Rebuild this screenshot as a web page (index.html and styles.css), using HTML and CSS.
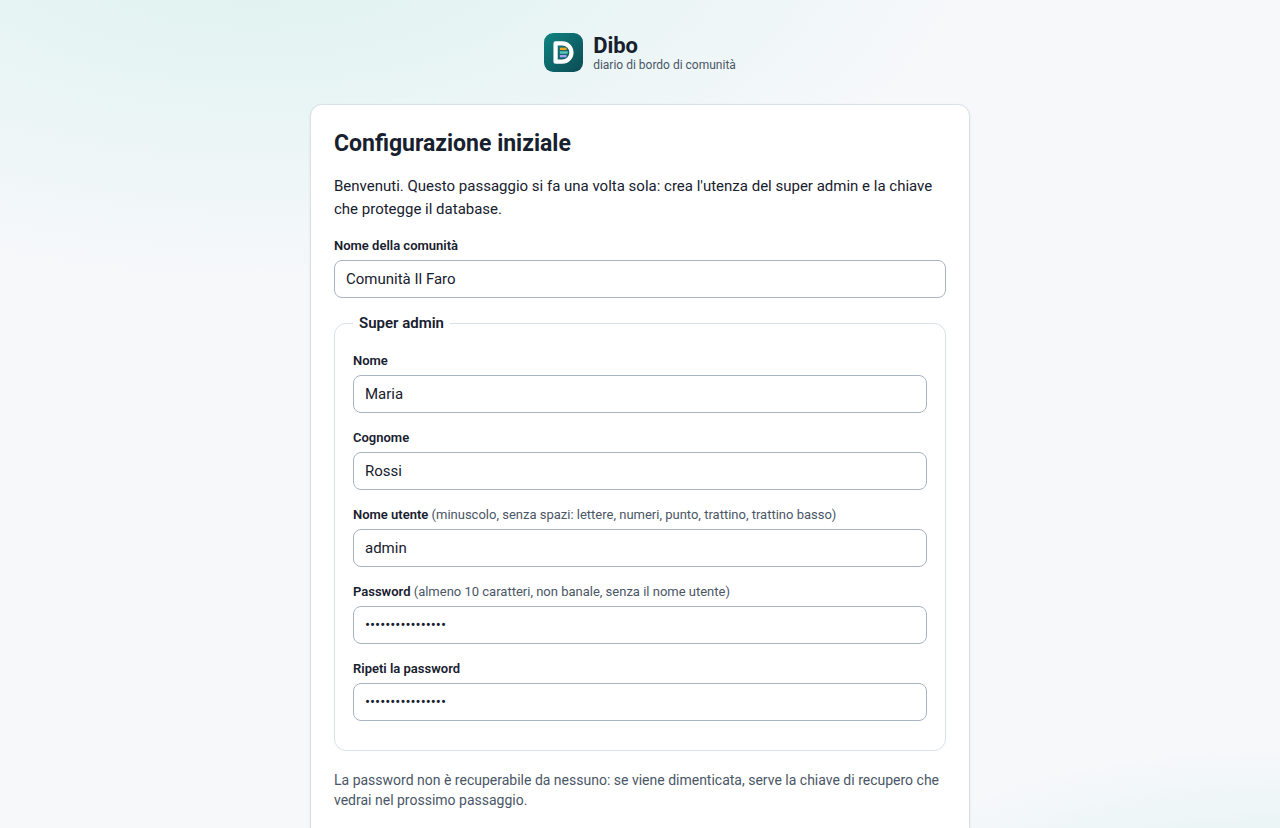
FILE: index.html
```html
<!DOCTYPE html>
<html lang="it">
<head>
    <meta charset="UTF-8">
    <meta name="viewport" content="width=device-width, initial-scale=1.0">
    <title>Dibo</title>
    <link rel="stylesheet" href="styles.css">
</head>
<body>
    <header class="brand">
        <svg class="brand-logo" viewBox="0 0 64 64" aria-hidden="true">
            <defs>
                <linearGradient id="logo-bg" x1="0" y1="0" x2="1" y2="1">
                    <stop offset="0" stop-color="#0f8482"/>
                    <stop offset="1" stop-color="#0c4a53"/>
                </linearGradient>
            </defs>
            <rect width="64" height="64" rx="15" fill="url(#logo-bg)"/>
            <path d="M19 17h11a15 15 0 0 1 0 30H19z" fill="none" stroke="#fff" stroke-width="7" stroke-linejoin="round"/>
            <path d="M26 26h11" stroke="#f5a623" stroke-width="4"/>
            <path d="M26 32h13" stroke="#5cc8bb" stroke-width="4"/>
            <path d="M26 38h11" stroke="#a5a0f5" stroke-width="4"/>
        </svg>
        <div class="brand-text">
            <span class="brand-name">Dibo</span>
            <span class="brand-tagline">diario di bordo di comunità</span>
        </div>
    </header>

    <main class="card">
        <h1>Configurazione iniziale</h1>
        <p class="intro">Benvenuti. Questo passaggio si fa una volta sola: crea l'utenza del super admin e la chiave che protegge il database.</p>
        <form>
            <div class="field">
                <label for="comunita">Nome della comunità</label>
                <input type="text" id="comunita" value="Comunità Il Faro">
            </div>
            <fieldset>
                <legend>Super admin</legend>
                <div class="field">
                    <label for="nome">Nome</label>
                    <input type="text" id="nome" value="Maria">
                </div>
                <div class="field">
                    <label for="cognome">Cognome</label>
                    <input type="text" id="cognome" value="Rossi">
                </div>
                <div class="field">
                    <label for="utente">Nome utente <span class="hint">(minuscolo, senza spazi: lettere, numeri, punto, trattino, trattino basso)</span></label>
                    <input type="text" id="utente" value="admin">
                </div>
                <div class="field">
                    <label for="password">Password <span class="hint">(almeno 10 caratteri, non banale, senza il nome utente)</span></label>
                    <input type="password" id="password" value="abcdefghijklmnop">
                </div>
                <div class="field">
                    <label for="password2">Ripeti la password</label>
                    <input type="password" id="password2" value="abcdefghijklmnop">
                </div>
            </fieldset>
            <p class="note">La password non è recuperabile da nessuno: se viene dimenticata, serve la chiave di recupero che vedrai nel prossimo passaggio.</p>
        </form>
    </main>
</body>
</html>
```

FILE: styles.css
```css
* {
    box-sizing: border-box;
}
body {
    margin: 0;
    padding: 33px 16px;
    font-family: Roboto, "Liberation Sans", sans-serif;
    font-size: 15px;
    line-height: 23px;
    color: #17202e;
    background:
        radial-gradient(1200px 600px at 20% -10%, #dbf1ef, transparent 60%) fixed,
        radial-gradient(900px 400px at 100% 115%, #dbf1ef, transparent 51%) fixed,
        #f6f8fa;
}
.brand {
    display: flex;
    align-items: center;
    justify-content: center;
    gap: 10px;
    margin-bottom: 32px;
}
.brand-logo {
    width: 39px;
    height: 39px;
}
.brand-text {
    display: flex;
    flex-direction: column;
}
.brand-name {
    font-size: 22px;
    font-weight: 700;
    line-height: 24px;
}
.brand-tagline {
    font-size: 12px;
    line-height: 14px;
    color: #4a5666;
}
.card {
    max-width: 660px;
    margin: 0 auto;
    padding: 23px;
    background: #fff;
    border: 1px solid #d9e0e8;
    border-radius: 12px;
    box-shadow: 0 1px 3px rgba(23, 32, 46, 0.08);
}
h1 {
    margin: 0 0 15px;
    font-size: 23px;
    font-weight: 700;
    line-height: 32px;
}
p {
    margin: 0 0 15px;
}
.field {
    margin-bottom: 15px;
}
label {
    display: block;
    margin-bottom: 4px;
    font-size: 13px;
    font-weight: 600;
    line-height: 20px;
}
.hint {
    font-weight: 400;
    color: #4a5666;
}
input {
    display: block;
    width: 100%;
    height: 38px;
    padding: 0 11px;
    font: inherit;
    color: inherit;
    background: #fff;
    border: 1px solid #a8b4c2;
    border-radius: 8px;
}
fieldset {
    margin: 0 0 19px;
    padding: 17px 18px 14px;
    border: 1px solid #d9e0e8;
    border-radius: 12px;
}
legend {
    padding: 0 6px;
    font-weight: 600;
    line-height: 21px;
}
.note {
    font-size: 14px;
    line-height: 20px;
    color: #4a5666;
}
```
